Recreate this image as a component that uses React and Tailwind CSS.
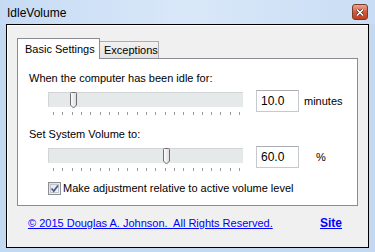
import { useState } from 'react';

const TICKS = Array.from({ length: 21 }, (_, i) => i);

function Thumb() {
  return (
    <svg width="9" height="17" viewBox="0 0 9 17" className="block">
      <defs>
        <linearGradient id="thumbFill" x1="0" x2="1" y1="0" y2="0">
          <stop offset="0" stopColor="#ffffff" />
          <stop offset="1" stopColor="#dadada" />
        </linearGradient>
      </defs>
      <path
        d="M1.5 1.5 Q1.5 0.5 2.5 0.5 L6.5 0.5 Q7.5 0.5 7.5 1.5 L7.5 13 L4.5 16 L1.5 13 Z"
        fill="url(#thumbFill)"
        stroke="#6f6f6f"
        strokeWidth="1"
      />
    </svg>
  );
}

function Trackbar({ step }) {
  return (
    <div className="w-[195px]">
      <div className="relative mt-[2px] h-[15px] bg-[#e6e9e9] border-t border-l border-[#d2d5d5]">
        <div className="absolute top-[-1px]" style={{ left: 1 + step * 9.3 }}>
          <Thumb />
        </div>
      </div>
      <div className="relative mt-[5px] h-[4px]">
        {TICKS.map((i) => (
          <div
            key={i}
            className="absolute top-0 w-px h-[3px] bg-[#9a9a9a]"
            style={{ left: Math.round(5 + i * 9.3) }}
          />
        ))}
      </div>
    </div>
  );
}

function NumberBox({ value }) {
  return (
    <div className="ml-[13px] w-[43px] h-[22px] bg-white border border-[#c5c9d0] border-t-[#abadb3] pl-[4px] flex items-center leading-none text-[12px]">
      {value}
    </div>
  );
}

export default function App() {
  const [relative, setRelative] = useState(true);

  return (
    <div className="w-[375px] h-[252px] bg-[#c3d8f1] font-['Liberation_Sans',Arial,sans-serif] text-[11px] text-black flex flex-col overflow-hidden whitespace-nowrap">
      {/* Title bar */}
      <div className="h-[24px] flex items-start bg-gradient-to-r from-[#c6dbf3] via-[#d9e8f9] to-[#c9ddf4]">
        <div className="pl-[7px] pt-[5px] leading-[16px] text-[12px] flex-1">IdleVolume</div>
        <button className="mt-[4px] mr-[7px] w-[16px] h-[16px] rounded-[3px] border border-[#7b3a2c] bg-gradient-to-b from-[#e9a590] via-[#d5593b] to-[#c0401f] flex items-center justify-center">
          <svg width="8" height="7" viewBox="0 0 8 7">
            <path d="M1 0.5 L7 6.5 M7 0.5 L1 6.5" stroke="#3a2a2a" strokeWidth="3" />
            <path d="M1 0.5 L7 6.5 M7 0.5 L1 6.5" stroke="#ffffff" strokeWidth="1.6" />
          </svg>
        </button>
      </div>

      {/* Client area */}
      <div className="mx-[6px] h-[224px] border border-black bg-[#f0f0f0]">
        <div className="h-full border-t border-l border-white pt-[12px] px-[9px]">
          {/* Tabs */}
          <div className="flex items-end h-[20px]">
            <div className="relative z-10 -mb-px h-[21px] w-[83px] bg-white border border-b-0 border-[#898c95] pl-[7px] pt-[2px] leading-[16px]">
              Basic Settings
            </div>
            <div className="h-[17px] w-[59px] bg-gradient-to-b from-[#f2f2f2] to-[#e3e3e3] border-t border-r border-[#acacac] pl-[4px] leading-[16px]">
              Exceptions
            </div>
          </div>

          {/* Panel */}
          <div className="h-[148px] w-[341px] bg-white border border-[#898c95] pl-[11px]">
            <div className="mt-[11px] leading-[16px]">When the computer has been idle for:</div>
            <div className="mt-[4px] flex items-start pl-[19px]">
              <Trackbar step={2} />
              <NumberBox value="10.0" />
              <div className="ml-[5px] h-[22px] flex items-center">minutes</div>
            </div>
            <div className="mt-[10px] leading-[16px]">Set System Volume to:</div>
            <div className="mt-[4px] flex items-start pl-[19px]">
              <Trackbar step={12} />
              <NumberBox value="60.0" />
              <div className="ml-[17px] h-[22px] flex items-center">%</div>
            </div>
            <label className="mt-[8px] pl-[19px] flex items-center gap-[2px] leading-[16px]">
              <span
                onClick={() => setRelative(!relative)}
                className="w-[13px] h-[13px] border border-[#8e8f8f] bg-gradient-to-br from-[#dcdcdc] to-[#f8f8f8] p-px"
              >
                <span className="block w-full h-full border border-[#c0c4cc] bg-gradient-to-br from-[#e4e7ef] to-[#f4f6f9]">
                  {relative && (
                    <svg width="9" height="9" viewBox="0 0 9 9" className="block -ml-px -mt-px">
                      <path d="M1.5 4.5 L3.8 7 L8 1.5" fill="none" stroke="#4d6185" strokeWidth="1.8" />
                    </svg>
                  )}
                </span>
              </span>
              <span>Make adjustment relative to active volume level</span>
            </label>
          </div>

          {/* Footer */}
          <div className="mt-[9px] flex items-center w-[341px] leading-[16px]">
            <a href="#" className="ml-[11px] text-[#0000ff] underline flex-1">
              © 2015 Douglas A. Johnson.&nbsp; All Rights Reserved.
            </a>
            <a href="#" className="mr-[16px] text-[#0000ff] underline font-bold text-[12px]">
              Site
            </a>
          </div>
        </div>
      </div>
    </div>
  );
}
